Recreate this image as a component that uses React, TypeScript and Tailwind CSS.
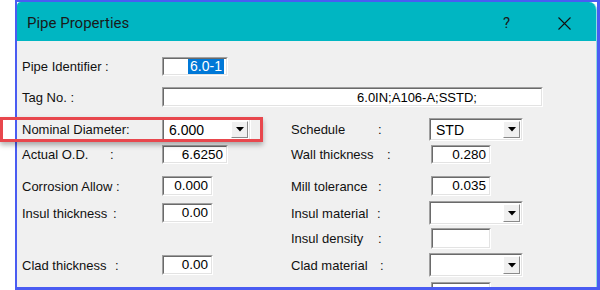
import React from "react";

const font = { fontFamily: '"Liberation Sans", Arial, sans-serif' };

function Sunken({ w, h, children, className = "" }: { w: string; h: string; children?: React.ReactNode; className?: string }) {
  return (
    <div className={`${w} ${h} border-t border-l border-t-[#a0a0a0] border-l-[#a0a0a0] border-r border-b border-r-white border-b-white flex`}>
      <div className={`flex-1 flex items-center bg-white border-t border-l border-t-[#6a6a6a] border-l-[#6a6a6a] border-r border-b border-r-[#e3e3e3] border-b-[#e3e3e3] ${className}`}>
        {children}
      </div>
    </div>
  );
}

function Combo({ w, h, value }: { w: string; h: string; value?: string }) {
  return (
    <Sunken w={w} h={h} className="pr-[1px] py-[1px]">
      <span className="flex-1 pl-[5px] text-[14px] text-black leading-none">{value}</span>
      <div className="w-[17px] h-full bg-[#f0f0f0] border-t border-l border-t-white border-l-white border-r border-b border-r-[#8a8a8a] border-b-[#8a8a8a] flex items-center justify-center">
        <svg width="8" height="5" viewBox="0 0 8 5"><path d="M0 0H8L4 4.5Z" fill="#000" /></svg>
      </div>
    </Sunken>
  );
}

function Label({ text, w, colon = true }: { text: string; w?: string; colon?: boolean }) {
  return (
    <div className="flex items-center text-[13px] text-[#111] leading-none whitespace-pre">
      <span className={w ? `${w} inline-block` : ""}>{text}</span>
      {colon && <span>:</span>}
    </div>
  );
}

function Num({ w, h, value }: { w: string; h: string; value?: string }) {
  return (
    <Sunken w={w} h={h} className="justify-end pr-[3px]">
      <span className="text-[13.5px] text-black leading-none">{value}</span>
    </Sunken>
  );
}

export default function App() {
  return (
    <div className="w-[600px] h-[290px] bg-white relative overflow-hidden pl-[15px]" style={font}>
      <div className="w-[585px] h-[290px] border-l-2 border-t-2 border-r-[3px] border-b-[3px] border-[#4a5cf2] bg-white">
        <div className="w-[580px] h-[285px] bg-[#f0f0f0] rounded-tl-[4px] rounded-tr-[8px] overflow-hidden border-r border-r-[#8fdce2] flex flex-col">
          <div className="h-[39px] shrink-0 bg-[#00b6c2] flex items-center pl-[10px] pt-[3px]">
            <span className="text-[15px] font-normal text-[#1a1a1a]" style={{ fontFamily: 'Roboto, "Noto Sans", sans-serif' }}>Pipe Properties</span>
            <span className="ml-auto text-[15px] text-[#1a1a1a] mr-[48px]" style={{ fontFamily: 'Roboto, sans-serif' }}>?</span>
            <svg width="13" height="13" viewBox="0 0 13 13" className="mr-[25px]">
              <path d="M0.5 0.5L12.5 12.5M12.5 0.5L0.5 12.5" stroke="#111" strokeWidth="1.1" />
            </svg>
          </div>
          <div className="flex flex-col pl-[5px]">
            {/* Row 1 */}
            <div className="mt-[16px] h-[19px] flex items-center">
              <div className="w-[140px]"><Label text="Pipe Identifier " /></div>
              <Sunken w="w-[66px]" h="h-[19px]" className="justify-end pr-[2px]">
                <span className="bg-[#0078d7] text-white text-[14px] leading-[15px] px-[2px]">6.0-1</span>
              </Sunken>
            </div>
            {/* Row 2 */}
            <div className="mt-[11px] h-[20px] flex items-center">
              <div className="w-[140px]"><Label text="Tag No. " /></div>
              <Sunken w="w-[381px]" h="h-[20px]" className="justify-end pr-[64px]">
                <span className="text-[13px] text-black leading-none">6.0IN;A106-A;SSTD;</span>
              </Sunken>
            </div>
            {/* Row 3 */}
            <div className="mt-[11px] h-[23px] flex items-center">
              <div className="w-[269px] flex items-center">
                <div className="w-[140px]"><Label text="Nominal Diameter:" colon={false} /></div>
                <Combo w="w-[89px]" h="h-[23px]" value="6.000" />
              </div>
              <div className="w-[138px]"><Label text="Schedule" w="w-[87px]" /></div>
              <Combo w="w-[94px]" h="h-[23px]" value="STD" />
            </div>
            {/* Row 4 */}
            <div className="mt-[4px] h-[19px] flex items-center">
              <div className="w-[269px] flex items-center">
                <div className="w-[140px]"><Label text="Actual O.D." w="w-[88px]" /></div>
                <Num w="w-[66px]" h="h-[19px]" value="6.6250" />
              </div>
              <div className="w-[140px]"><Label text="Wall thickness " w="w-[96px]" /></div>
              <Num w="w-[60px]" h="h-[19px]" value="0.280" />
            </div>
            {/* Row 5 */}
            <div className="mt-[12px] h-[20px] flex items-center">
              <div className="w-[269px] flex items-center">
                <div className="w-[140px]"><Label text="Corrosion Allow " w="w-[94px]" /></div>
                <Num w="w-[51px]" h="h-[20px]" value="0.000" />
              </div>
              <div className="w-[140px]"><Label text="Mill tolerance " w="w-[87px]" /></div>
              <Num w="w-[60px]" h="h-[20px]" value="0.035" />
            </div>
            {/* Row 6 */}
            <div className="mt-[5px] h-[24px] flex items-center">
              <div className="w-[269px] flex items-center">
                <div className="w-[140px]"><Label text="Insul thickness " w="w-[91px]" /></div>
                <Num w="w-[51px]" h="h-[20px]" value="0.00" />
              </div>
              <div className="w-[138px]"><Label text="Insul material " w="w-[86px]" /></div>
              <Combo w="w-[94px]" h="h-[24px]" />
            </div>
            {/* Row 7 */}
            <div className="mt-[3px] h-[21px] flex items-center">
              <div className="w-[269px]" />
              <div className="w-[140px]"><Label text="Insul density " w="w-[87px]" /></div>
              <Num w="w-[60px]" h="h-[21px]" />
            </div>
            {/* Row 8 */}
            <div className="mt-[4px] h-[24px] flex items-center">
              <div className="w-[269px] flex items-center">
                <div className="w-[140px]"><Label text="Clad thickness " w="w-[93px]" /></div>
                <Num w="w-[51px]" h="h-[20px]" value="0.00" />
              </div>
              <div className="w-[138px]"><Label text="Clad material " w="w-[89px]" /></div>
              <Combo w="w-[94px]" h="h-[24px]" />
            </div>
            {/* Row 9 */}
            <div className="mt-[5px] h-[20px] flex items-center">
              <div className="w-[269px]" />
              <div className="w-[140px]"><Label text="Clad density " w="w-[87px]" /></div>
              <Num w="w-[60px]" h="h-[20px]" />
            </div>
          </div>
        </div>
      </div>
      {/* red annotation box */}
      <div className="absolute left-0 top-[117px] w-[263px] h-[25px] border-[3px] border-[#e8474d] shadow-[0_3px_5px_rgba(0,0,0,0.3)]" />
    </div>
  );
}
